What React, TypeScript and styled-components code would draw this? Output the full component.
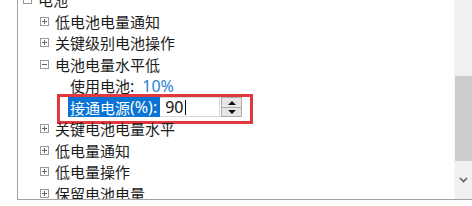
import styled, { createGlobalStyle } from "styled-components";

const GlobalStyle = createGlobalStyle`
  html, body {
    margin: 0;
    padding: 0;
    background: #ffffff;
  }
  body {
    font-family: "Noto Sans", "Noto Sans CJK SC", sans-serif;
    font-size: 15px;
    color: #1c1c1c;
  }
`;

const ROW_HEIGHT = 21.5;

const Frame = styled.div`
  width: 472px;
  height: 206px;
  padding-left: 17px;
  box-sizing: border-box;
  overflow: hidden;
`;

const Panel = styled.div`
  display: flex;
  height: 200px;
  box-sizing: border-box;
  border-left: 1px solid #a4a4a4;
  border-bottom: 1px solid #a4a4a4;
  overflow: hidden;
`;

const Tree = styled.div`
  flex: 1;
  overflow: hidden;
`;

const List = styled.ul`
  list-style: none;
  margin: -11px 0 0 0;
  padding: 0;
`;

const Row = styled.li<{ $indent: number }>`
  position: relative;
  display: flex;
  align-items: center;
  height: ${ROW_HEIGHT}px;
  padding-left: ${(p) => p.$indent}px;
  white-space: nowrap;
  font-family: "Noto Sans CJK SC", sans-serif;
  line-height: 1;
`;

const Toggle = styled.span`
  position: relative;
  width: 9px;
  height: 9px;
  box-sizing: border-box;
  border: 1px solid #9a9a9a;
  margin-right: 6px;
  flex-shrink: 0;

  &::before {
    content: "";
    position: absolute;
    left: 1px;
    top: 3px;
    width: 5px;
    height: 1px;
    background: #666;
  }
`;

const Expand = styled(Toggle)`
  &::after {
    content: "";
    position: absolute;
    left: 3px;
    top: 1px;
    width: 1px;
    height: 5px;
    background: #666;
  }
`;

const Value = styled.span`
  color: #2d84d6;
  margin-left: 8px;
  font-family: "Noto Sans", sans-serif;
  font-size: 16px;
`;

const Label = styled.span`
  display: flex;
  align-items: center;
  height: 20px;
  padding: 0 3px 0 2px;
  background: #0a74d4;
  color: #ffffff;
`;

const Latin = styled.span`
  font-family: "Noto Sans", sans-serif;
  font-size: 16px;
`;

const Field = styled.div`
  display: flex;
  align-items: center;
  width: 60px;
  height: 20px;
  box-sizing: border-box;
  padding-left: 5px;
  border: 1px solid #d6d6d6;
  border-left: none;
  background: #ffffff;
  font-family: "Noto Sans", sans-serif;
  font-size: 16px;
  color: #111;
`;

const Caret = styled.span`
  width: 1px;
  height: 15px;
  margin-left: 1px;
  background: #000;
`;

const Spinner = styled.div`
  display: flex;
  flex-direction: column;
  width: 21px;
  height: 20px;
  margin-left: 1px;
`;

const SpinButton = styled.div<{ $down?: boolean }>`
  flex: 1;
  display: flex;
  align-items: center;
  justify-content: center;
  background: #e6e6e6;
  border: 1px solid #acacac;
  ${(p) => (p.$down ? "border-top: none;" : "")}

  &::before {
    content: "";
    border-left: 4px solid transparent;
    border-right: 4px solid transparent;
    ${(p) =>
      p.$down ? "border-top: 4px solid #111;" : "border-bottom: 4px solid #111;"}
  }
`;

const Highlight = styled.div`
  position: absolute;
  left: 39px;
  top: -3px;
  width: 196px;
  height: 30px;
  box-sizing: border-box;
  border: 3px solid #e2383d;
  pointer-events: none;
`;

const Scrollbar = styled.div`
  display: flex;
  flex-direction: column;
  width: 17px;
  background: #f0f0f0;
  border-left: 1px solid #f7f7f7;
`;

const TrackGap = styled.div<{ $size: number }>`
  height: ${(p) => p.$size}px;
`;

const Thumb = styled.div`
  height: 85px;
  background: #cdcdcd;
`;

const Spacer = styled.div`
  flex: 1;
`;

const ArrowButton = styled.div`
  height: 17px;
  display: flex;
  align-items: flex-start;
  justify-content: center;
  padding-bottom: 5px;
`;

type Node = { text: string; level: number; kind?: "open" | "closed" };

const above: Node[] = [
  { text: "电池", level: 1, kind: "open" },
  { text: "低电池电量通知", level: 2, kind: "closed" },
  { text: "关键级别电池操作", level: 2, kind: "closed" },
  { text: "电池电量水平低", level: 2, kind: "open" },
];

const below: Node[] = [
  { text: "关键电池电量水平", level: 2, kind: "closed" },
  { text: "低电量通知", level: 2, kind: "closed" },
  { text: "低电量操作", level: 2, kind: "closed" },
  { text: "保留电池电量", level: 2, kind: "closed" },
];

const indentFor = (level: number) => 5 + (level - 1) * 17;

const TreeRow = ({ node }: { node: Node }) => (
  <Row $indent={indentFor(node.level)}>
    {node.kind === "open" ? <Toggle /> : <Expand />}
    {node.text}
  </Row>
);

export default function App() {
  return (
    <>
      <GlobalStyle />
      <Frame>
        <Panel>
          <Tree>
            <List>
              {above.map((n) => (
                <TreeRow key={n.text} node={n} />
              ))}
              <Row $indent={52}>
                使用电池<Latin>:</Latin>
                <Value>10%</Value>
              </Row>
              <Row $indent={50}>
                <Label>
                  接通电源<Latin>(%):</Latin>
                </Label>
                <Field>
                  90
                  <Caret />
                </Field>
                <Spinner>
                  <SpinButton />
                  <SpinButton $down />
                </Spinner>
                <Highlight />
              </Row>
              {below.map((n) => (
                <TreeRow key={n.text} node={n} />
              ))}
            </List>
          </Tree>
          <Scrollbar>
            <TrackGap $size={76} />
            <Thumb />
            <Spacer />
            <ArrowButton>
              <svg width="9" height="6" viewBox="0 0 9 6">
                <path
                  d="M1 1 L4.5 4.5 L8 1"
                  fill="none"
                  stroke="#5f5f5f"
                  strokeWidth="1.6"
                />
              </svg>
            </ArrowButton>
          </Scrollbar>
        </Panel>
      </Frame>
    </>
  );
}
